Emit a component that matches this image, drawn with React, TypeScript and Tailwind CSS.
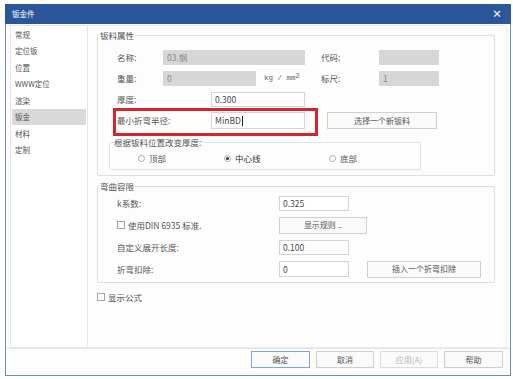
import React from "react";

function Input({ w, h = 15, value, disabled, mono, cursor }: { w: number; h?: number; value?: string; disabled?: boolean; mono?: boolean; cursor?: boolean }) {
  return (
    <div
      className={`flex items-center px-[3px] text-[8.5px] leading-none border ${disabled ? "bg-[#d6d6d6] border-[#d6d6d6] text-[#8a8a8a]" : "bg-white border-[#d4d4d4] text-[#4a4a4a]"}`}
      style={{ width: w, height: h }}
    >
      <span className={mono ? "font-['Liberation_Mono',monospace]" : ""}>{value}</span>
      {cursor && <span className="ml-px w-px h-[10px] bg-[#222]" />}
    </div>
  );
}

function Btn({ w, h = 17, children, cls = "" }: { w: number; h?: number; children: React.ReactNode; cls?: string }) {
  return (
    <div
      className={`flex items-center justify-center bg-[#fafafa] border text-[8px] leading-none ${cls || "border-[#cfcfcf] text-[#555]"}`}
      style={{ width: w, height: h }}
    >
      {children}
    </div>
  );
}

function Check() {
  return <div className="w-[8px] h-[8px] border border-[#a5a5a5] bg-white shrink-0" />;
}

function Radio({ checked }: { checked?: boolean }) {
  return (
    <div className="w-[7px] h-[7px] rounded-full border border-[#a8a8a8] bg-white flex items-center justify-center shrink-0">
      {checked && <div className="w-[3px] h-[3px] rounded-full bg-[#333]" />}
    </div>
  );
}

const sideItems = ["常规", "定位钣", "位置", "WWW定位", "渲染", "钣金", "材料", "定制"];

export default function App() {
  return (
    <div className="relative w-[513px] h-[379px] bg-white pt-[4px] pl-[5px] font-['Noto_Sans_CJK_SC','Noto_Sans',sans-serif] text-[#555]">
      <div className="w-[506px] h-[372px] flex flex-col border-x border-b border-[#6f8db5] bg-[#fdfdfd]">
        {/* title bar */}
        <div className="h-[20px] -mx-px shrink-0 bg-[#2b579a] flex items-center justify-between pl-[7px] pr-[9px] text-white">
          <span className="text-[7.5px] leading-none">钣金件</span>
          <span className="text-[10px] leading-none font-bold">×</span>
        </div>
        {/* body */}
        <div className="h-[324px] shrink-0 flex pl-[4px] pr-[3px] pt-[1px]">
          <div className="w-[78px] border border-[#e6e6e6] bg-white flex flex-col px-px">
            {sideItems.map((s) => (
              <div
                key={s}
                className={`h-[16.5px] shrink-0 flex items-center pl-[3px] text-[7.5px] leading-none ${s === "钣金" ? "bg-[#d9d9d9]" : ""}`}
              >
                {s}
              </div>
            ))}
          </div>
          <div className="flex-1 border border-l-0 border-[#ececec] pl-[9px] pt-[3px]">
            {/* group 1 */}
            <fieldset className="w-[398px] border border-[#dedede] rounded-[2px] pb-[5px]">
              <legend className="ml-px px-px text-[8.5px] leading-[12px]">钣料属性</legend>
              <div className="mt-[6px] flex flex-col text-[8.5px] leading-none">
                <div className="h-[21px] flex items-center pl-[19px]">
                  <span className="w-[46px]">名称:</span>
                  <Input w={142} value="03.钢" disabled />
                  <span className="w-[58px] ml-[16px]">代码:</span>
                  <Input w={60} disabled />
                </div>
                <div className="h-[21px] flex items-center pl-[19px]">
                  <span className="w-[46px]">重量:</span>
                  <Input w={93} value="0" disabled />
                  <span className="w-[65px] pl-[8px] font-['Liberation_Mono',monospace] text-[7.5px] text-[#666]">
                    kg / mm<sup className="text-[7px] relative -top-[2px]">2</sup>
                  </span>
                  <span className="w-[58px]">标尺:</span>
                  <Input w={60} value="1" disabled />
                </div>
                <div className="h-[21px] flex items-center pl-[19px]">
                  <span className="w-[94px]">厚度:</span>
                  <Input w={94} value="0.300" />
                </div>
                <div className="h-[21px] flex items-center pl-[19px]">
                  <span className="w-[94px]">最小折弯半径:</span>
                  <Input w={94} h={17} value="MinBD" cursor />
                  <div className="ml-[22px]">
                    <Btn w={110}>选择一个新钣料</Btn>
                  </div>
                </div>
              </div>
              {/* inner group */}
              <fieldset className="mt-[5px] ml-[11px] w-[312px] border border-[#e2e2e2] rounded-[2px]">
                <legend className="ml-[4px] text-[8.5px] leading-[12px]">根据钣料位置改变厚度:</legend>
                <div className="h-[21px] flex items-center pl-[28px] text-[8.5px] leading-none">
                  <div className="w-[86px] flex items-center gap-[4px]">
                    <Radio />
                    <span>顶部</span>
                  </div>
                  <div className="w-[105px] flex items-center gap-[4px]">
                    <Radio checked />
                    <span className="text-[#333]">中心线</span>
                  </div>
                  <div className="flex items-center gap-[4px]">
                    <Radio />
                    <span>底部</span>
                  </div>
                </div>
              </fieldset>
            </fieldset>
            {/* group 2 */}
            <fieldset className="mt-[4px] w-[398px] border border-[#dedede] rounded-[2px] pb-[2px]">
              <legend className="ml-px px-px text-[8.5px] leading-[12px]">弯曲容限</legend>
              <div className="flex flex-col text-[8.5px] leading-none">
                <div className="h-[22px] flex items-center pl-[19px]">
                  <span className="w-[162px]">k系数:</span>
                  <Input w={70} value="0.325" />
                </div>
                <div className="h-[22px] flex items-center pl-[19px]">
                  <div className="w-[162px] flex items-center gap-[3px]">
                    <Check />
                    <span>使用DIN 6935 标准.</span>
                  </div>
                  <Btn w={88}>显示规则 ..</Btn>
                </div>
                <div className="h-[22px] flex items-center pl-[19px]">
                  <span className="w-[162px]">自定义展开长度:</span>
                  <Input w={70} value="0.100" />
                </div>
                <div className="h-[22px] flex items-center pl-[19px]">
                  <span className="w-[162px]">折弯扣除:</span>
                  <Input w={70} h={16} value="0" />
                  <div className="ml-[18px]">
                    <Btn w={114}>插入一个折弯扣除</Btn>
                  </div>
                </div>
              </div>
            </fieldset>
            <div className="mt-[7px] h-[14px] flex items-center gap-[3px] text-[8.5px] leading-none">
              <Check />
              <span>显示公式</span>
            </div>
          </div>
        </div>
        {/* footer */}
        <div className="flex-1 border-t border-[#e4e4e4] flex justify-end items-start pt-[2px] pr-[7px] gap-[6px]">
          <Btn w={59} cls="border-[#7aa7da] text-[#555]">确定</Btn>
          <Btn w={58}>取消</Btn>
          <Btn w={58} cls="border-[#dcdcdc] text-[#b5b5b5]">应用(A)</Btn>
          <Btn w={59}>帮助</Btn>
        </div>
      </div>
      {/* annotation */}
      <div className="absolute left-[113px] top-[108px] w-[205px] h-[28px] border-[3px] border-[#d4252c]" />
    </div>
  );
}
